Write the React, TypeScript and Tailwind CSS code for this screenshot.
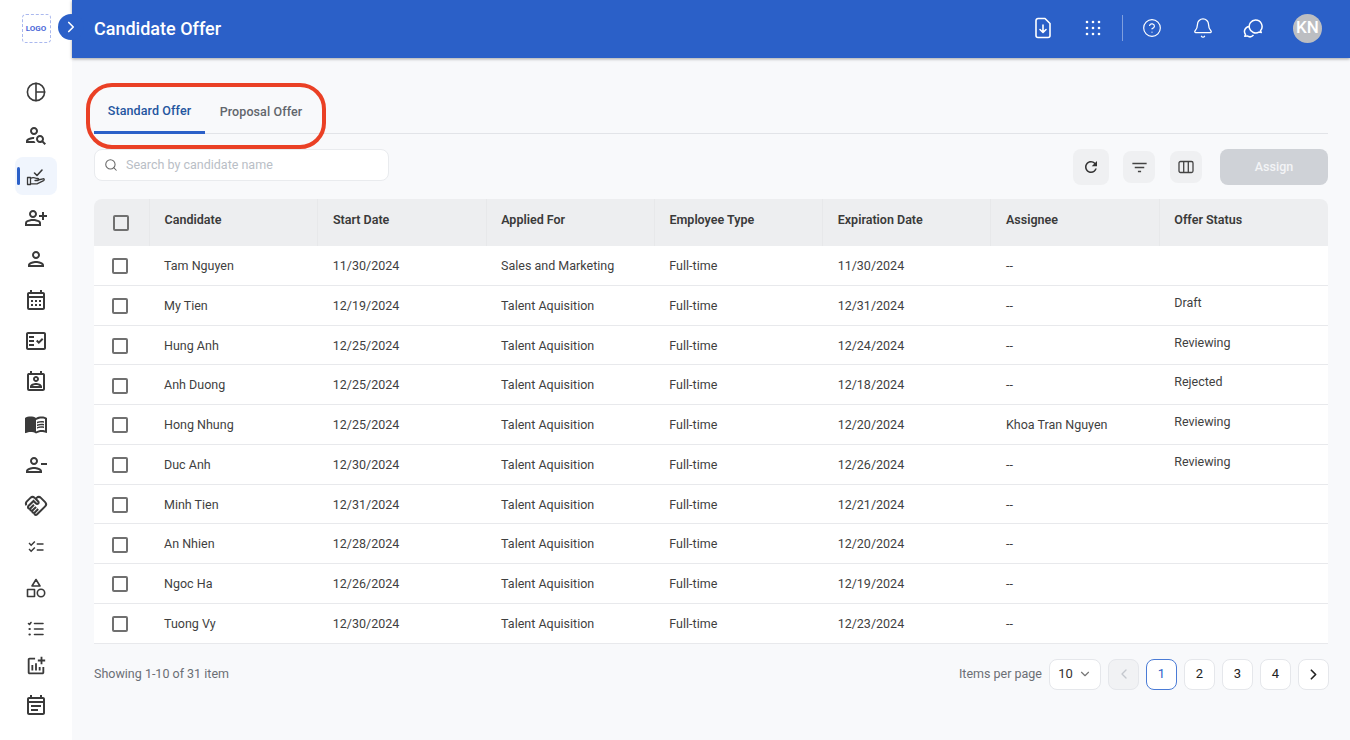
import { ChevronDown, ChevronLeft, ChevronRight, CircleHelp, Bell, Search } from 'lucide-react';
import {
  MdOutlinePersonSearch,
  MdOutlinePersonAddAlt,
  MdOutlinePerson,
  MdOutlineCalendarMonth,
  MdOutlineFactCheck,
  MdOutlinePermContactCalendar,
  MdMenuBook,
  MdOutlinePersonRemove,
  MdOutlineHandshake,
  MdOutlineChecklist,
  MdOutlineAddchart,
  MdOutlineEventNote,
  MdRefresh,
  MdFilterList,
} from 'react-icons/md';

const rows = [
  { name: 'Tam Nguyen', start: '11/30/2024', applied: 'Sales and Marketing', exp: '11/30/2024', assignee: '--', status: '' },
  { name: 'My Tien', start: '12/19/2024', applied: 'Talent Aquisition', exp: '12/31/2024', assignee: '--', status: 'Draft' },
  { name: 'Hung Anh', start: '12/25/2024', applied: 'Talent Aquisition', exp: '12/24/2024', assignee: '--', status: 'Reviewing' },
  { name: 'Anh Duong', start: '12/25/2024', applied: 'Talent Aquisition', exp: '12/18/2024', assignee: '--', status: 'Rejected' },
  { name: 'Hong Nhung', start: '12/25/2024', applied: 'Talent Aquisition', exp: '12/20/2024', assignee: 'Khoa Tran Nguyen', status: 'Reviewing' },
  { name: 'Duc Anh', start: '12/30/2024', applied: 'Talent Aquisition', exp: '12/26/2024', assignee: '--', status: 'Reviewing' },
  { name: 'Minh Tien', start: '12/31/2024', applied: 'Talent Aquisition', exp: '12/21/2024', assignee: '--', status: '' },
  { name: 'An Nhien', start: '12/28/2024', applied: 'Talent Aquisition', exp: '12/20/2024', assignee: '--', status: '' },
  { name: 'Ngoc Ha', start: '12/26/2024', applied: 'Talent Aquisition', exp: '12/19/2024', assignee: '--', status: '' },
  { name: 'Tuong Vy', start: '12/30/2024', applied: 'Talent Aquisition', exp: '12/23/2024', assignee: '--', status: '' },
];

const headers = ['Candidate', 'Start Date', 'Applied For', 'Employee Type', 'Expiration Date', 'Assignee', 'Offer Status'];

const iconColor = '#3a3a3a';

function NavIcon({ children }: { children: React.ReactNode }) {
  return (
    <svg width="24" height="24" viewBox="0 0 24 24" fill="none" stroke={iconColor} strokeWidth="1.6" strokeLinecap="round" strokeLinejoin="round">
      {children}
    </svg>
  );
}

const navIcons = [
  <NavIcon><circle cx="12" cy="12" r="8.6" /><path d="M12 3.400v17.200M12 12h8.600" /></NavIcon>,
  <MdOutlinePersonSearch size={24} color={iconColor} />,
  <NavIcon><path d="M10.500 9l2.500 2.500L18 6" /><path d="M3.500 13.500h3v7h-3zM6.500 14.500c2-1.500 4-1 6 0h1.500c1 0 1 2 0 2h-3M14 16l5-1.200c1.400-.2 1.600 1.200.6 1.800L13 19.800H6.500" strokeWidth="1.300" /></NavIcon>,
  <MdOutlinePersonAddAlt size={24} color={iconColor} />,
  <MdOutlinePerson size={24} color={iconColor} />,
  <MdOutlineCalendarMonth size={24} color={iconColor} />,
  <MdOutlineFactCheck size={24} color={iconColor} />,
  <MdOutlinePermContactCalendar size={24} color={iconColor} />,
  <MdMenuBook size={24} color={iconColor} />,
  <MdOutlinePersonRemove size={24} color={iconColor} />,
  <MdOutlineHandshake size={24} color={iconColor} />,
  <MdOutlineChecklist size={18} color={iconColor} />,
  <NavIcon><path d="M12 3.500l4 6.500H8z" /><rect x="3.500" y="13.500" width="7" height="7" /><circle cx="17" cy="17" r="3.700" /></NavIcon>,
  <NavIcon><path d="M4.500 6.500l1 1 1.500-2M10.500 6.500h8.500M10.500 12h8.500M10.500 17.500h8.500" /><path strokeWidth="2.200" d="M5.500 12h.3M5.500 17.500h.3" /></NavIcon>,
  <MdOutlineAddchart size={22} color={iconColor} />,
  <MdOutlineEventNote size={24} color={iconColor} />,
];

function navItemClass(i: number) {
  if (i === 1) return 'mt-[2px] flex h-[24px] items-center justify-center';
  if (i === 2) return 'relative -mt-[7px] -mb-[7px] flex h-[38px] w-[42px] items-center justify-center rounded-lg bg-[#f0f5fd]';
  if (i === 14) return '-mt-[5px] flex h-[24px] items-center justify-center';
  if (i === 15) return '-mt-[1px] flex h-[24px] items-center justify-center';
  return 'flex h-[24px] items-center justify-center';
}

function Checkbox() {
  return <span className="block h-[16px] w-[16px] rounded-[2px] border-2 border-[#707070]" />;
}

function ToolButton({ children, size }: { children: React.ReactNode; size: string }) {
  return <button className={`flex items-center justify-center rounded-lg bg-[#eff0f2] ${size}`}>{children}</button>;
}

function PageButton({ children, active, disabled }: { children: React.ReactNode; active?: boolean; disabled?: boolean }) {
  return (
    <button
      className={
        active
          ? 'flex h-[31px] w-[31px] items-center justify-center rounded-lg border border-[#4a7bd6] bg-white text-[13px] text-[#2b60c8]'
          : disabled
            ? 'flex h-[31px] w-[31px] items-center justify-center rounded-lg border border-[#e5e7eb] bg-[#f1f2f4] text-[13px] text-[#c4c8ce]'
            : 'flex h-[31px] w-[31px] items-center justify-center rounded-lg border border-[#e5e7eb] bg-white text-[13px] text-[#222]'
      }
    >
      {children}
    </button>
  );
}

export default function App() {
  return (
    <div className="flex h-[740px] w-[1350px] overflow-hidden bg-[#f8f9fb] font-['Roboto',sans-serif] text-[#3a3a3a]">
      {/* sidebar */}
      <aside className="z-10 flex w-[72px] shrink-0 flex-col items-center bg-white">
        <div className="mt-[14px] flex h-[29px] w-[29px] items-center justify-center rounded-[4px] border border-dashed border-[#aab8ee]">
          <span className="text-[8px] font-bold text-[#4b68d8]">LOGO</span>
        </div>
        <nav className="mt-[37px] flex w-full flex-col items-center gap-[17.2px]">
          {navIcons.map((icon, i) => (
            <div key={i} className={navItemClass(i)}>
              {i === 2 && <span className="absolute left-[2px] top-[10px] h-[18px] w-[3px] rounded-full bg-[#2b60c8]" />}
              {icon}
            </div>
          ))}
        </nav>
      </aside>

      <div className="relative flex min-w-0 flex-1 flex-col">
        {/* expand handle */}
        <button className="absolute -left-[14px] top-[14px] z-20 flex h-[26px] w-[26px] items-center justify-center rounded-full bg-[#2b60c8] text-white">
          <ChevronRight size={18} strokeWidth={2.2} />
        </button>

        <header className="z-10 flex h-[58px] shrink-0 items-center bg-[#2b60c8] pb-[2px] pl-[22px] pr-[28px] shadow-[0_1px_3px_rgba(0,0,0,0.35)]">
          <h1 className="text-[18px] font-medium text-white">Candidate Offer</h1>
          <div className="ml-auto flex items-center text-white">
            <svg width="20" height="22" viewBox="0 0 20 22" fill="none" stroke="white" strokeWidth="1.6" strokeLinecap="round" strokeLinejoin="round">
              <path d="M3 3.500a2 2 0 0 1 2-2h7l5 5v12a2 2 0 0 1-2 2H5a2 2 0 0 1-2-2z" />
              <path d="M10 8v7M7 12.500l3 3 3-3" />
            </svg>
            <svg className="ml-[32px]" width="16" height="16" viewBox="0 0 16 16" fill="white">
              {[2, 8, 14].flatMap((y) => [2, 8, 14].map((x) => <circle key={`${x}-${y}`} cx={x} cy={y} r="1.300" />))}
            </svg>
            <span className="ml-[21px] h-[26px] w-px bg-white/40" />
            <CircleHelp className="ml-[19px]" size={20} strokeWidth={1.4} />
            <Bell className="ml-[30px]" size={22} strokeWidth={1.4} />
            <svg className="ml-[29px]" width="21" height="20" viewBox="0 0 21 20" fill="none" stroke="white" strokeWidth="1.500" strokeLinejoin="round">
              <path d="M12.500 2a6.500 6.500 0 0 1 5 10.700l.8 1.800-2.300-.4A6.500 6.500 0 1 1 12.500 2z" />
              <path d="M6.200 8.500a5 5 0 0 0-3.700 8l-.7 1.800 2.300-.4a5 5 0 0 0 6.400-.8" />
            </svg>
            <span className="ml-[29px] flex h-[29px] w-[29px] items-center justify-center rounded-full bg-[#bcbec2] text-[17px] font-medium text-white">KN</span>
          </div>
        </header>

        <main className="relative flex flex-1 flex-col pl-[22px] pr-[22px]">
          {/* tabs */}
          <div className="mt-[36px] flex h-[40px] items-stretch border-b border-[#e2e4e8]">
            <div className="-mb-px flex w-[111px] items-center justify-center border-b-[3px] border-[#2b60c8] pb-[3px] text-[12.5px] font-medium tracking-[0.1px] text-[#24569f]">Standard Offer</div>
            <div className="flex w-[112px] items-center justify-center pb-[3px] text-[12.5px] font-medium tracking-[0.1px] text-[#62666c]">Proposal Offer</div>
          </div>
          {/* annotation on top of the screenshot */}
          <div className="pointer-events-none absolute left-[14px] top-[25px] h-[66px] w-[240px] rounded-[26px] border-[4.5px] border-[#ea4025]" />

          {/* toolbar */}
          <div className="mt-[15px] flex h-[36px] items-start">
            <label className="flex h-[32px] w-[295px] items-center gap-[8px] rounded-lg border border-[#e9ebee] bg-white pl-[9px]">
              <Search size={14} strokeWidth={1.8} className="text-[#666]" />
              <span className="text-[12.5px] text-[#b9bec6]">Search by candidate name</span>
            </label>
            <div className="ml-auto flex items-center">
              <ToolButton size="h-[36px] w-[36px]"><MdRefresh size={18} color="#333" /></ToolButton>
              <ToolButton size="ml-[14px] h-[32px] w-[32px]"><MdFilterList size={19} color="#444" /></ToolButton>
              <ToolButton size="ml-[15px] h-[32px] w-[32px]">
                <svg width="16" height="14" viewBox="0 0 16 14" fill="none" stroke="#444" strokeWidth="1.300"><rect x="1" y="1.500" width="14" height="11" rx="1.500" /><path d="M5.700 1.500v11M10.300 1.500v11" /></svg>
              </ToolButton>
              <button className="ml-[18px] h-[36px] w-[108px] rounded-lg bg-[#cfd2d7] text-[12.5px] font-medium text-[#f3f4f6]">Assign</button>
            </div>
          </div>

          {/* table */}
          <div className="mt-[14px]">
            <div className="grid h-[47px] grid-cols-[56px_repeat(7,1fr)] items-center rounded-t-lg bg-[#edeef0] text-[12.5px] font-semibold text-[#3a3a3a]">
              <div className="flex h-full items-center justify-center border-r border-[#e7e8ea] pr-[2px]"><Checkbox /></div>
              {headers.map((h, i) => (
                <div key={h} className={i < 6 ? 'flex h-full items-center border-r border-[#e7e8ea] pb-[4px] pl-[14.6px]' : 'flex h-full items-center pb-[4px] pl-[14.6px]'}>{h}</div>
              ))}
            </div>
            {rows.map((r) => (
              <div key={r.name} className="grid h-[39.75px] grid-cols-[56px_repeat(7,1fr)] items-center border-b border-[#e8e9ec] bg-white pt-[2px] text-[12.5px] text-[#3f3f3f]">
                <div className="flex items-center justify-center pr-[4px]"><Checkbox /></div>
                <div className="pl-[14px]">{r.name}</div>
                <div className="pl-[14.500px]">{r.start}</div>
                <div className="pl-[14.500px]">{r.applied}</div>
                <div className="pl-[14.500px]">Full-time</div>
                <div className="pl-[14.500px]">{r.exp}</div>
                <div className="pl-[14.500px]">{r.assignee}</div>
                <div className="pb-[6px] pl-[14.500px]">{r.status}</div>
              </div>
            ))}
          </div>

          {/* footer */}
          <div className="mt-[15px] flex items-center text-[12.5px]">
            <span className="text-[#6b6f75]">Showing 1-10 of 31 item</span>
            <div className="-mr-[1px] ml-auto flex items-center gap-[7px]">
              <span className="text-[#6b6f75]">Items per page</span>
              <div className="flex h-[31px] w-[52px] items-center justify-center gap-[5px] rounded-lg border border-[#e5e7eb] bg-white text-[13px] text-[#333]">
                10 <ChevronDown size={14} className="text-[#777]" />
              </div>
              <PageButton disabled><ChevronLeft size={16} /></PageButton>
              <PageButton active>1</PageButton>
              <PageButton>2</PageButton>
              <PageButton>3</PageButton>
              <PageButton>4</PageButton>
              <PageButton><ChevronRight size={17} strokeWidth={2.4} /></PageButton>
            </div>
          </div>
        </main>
      </div>
    </div>
  );
}
